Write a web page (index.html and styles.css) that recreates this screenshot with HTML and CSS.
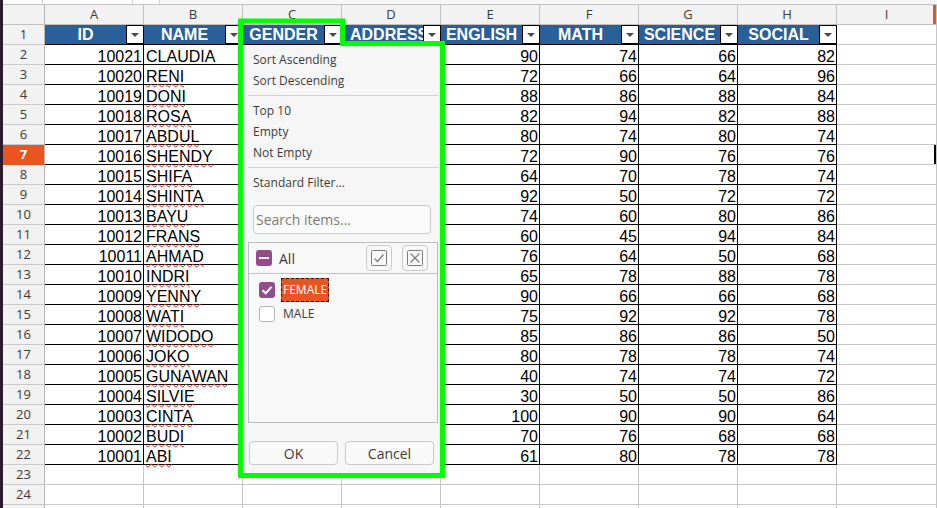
FILE: index.html
```html
<!DOCTYPE html>
<html lang="en">
<head>
  <meta charset="UTF-8" />
  <meta name="viewport" content="width=device-width, initial-scale=1.0"/>
  <title>Scores | AutoFilter</title>
  <link rel="stylesheet" href="styles.css">
</head>
<body>

<div class="window">
  <div class="edge"></div>

  <div class="sheet">
    <div class="toolbar">
      <div class="tool"></div>
      <div class="tool wide"></div>
      <div class="tool small"></div>
    </div>

    <div class="row colhead">
      <div class="rh"></div>
      <div class="c">A</div>
      <div class="c">B</div>
      <div class="c">C</div>
      <div class="c">D</div>
      <div class="c">E</div>
      <div class="c">F</div>
      <div class="c">G</div>
      <div class="c">H</div>
      <div class="c last mark">I</div>
    </div>

    <div class="row thead">
      <div class="rh">1</div>
      <div class="c"><span class="label">ID</span><span class="dd"></span></div>
      <div class="c"><span class="label">NAME</span><span class="dd"></span></div>
      <div class="c"><span class="label">GENDER</span><span class="dd"></span></div>
      <div class="c"><span class="label clip">ADDRESS</span><span class="dd"></span></div>
      <div class="c"><span class="label">ENGLISH</span><span class="dd"></span></div>
      <div class="c"><span class="label">MATH</span><span class="dd"></span></div>
      <div class="c"><span class="label">SCIENCE</span><span class="dd"></span></div>
      <div class="c"><span class="label">SOCIAL</span><span class="dd"></span></div>
      <div class="c last"></div>
    </div>

    <div class="row tr"><div class="rh">2</div><div class="c">10021</div><div class="c">CLAUDIA</div><div class="c"></div><div class="c"></div><div class="c">90</div><div class="c">74</div><div class="c">66</div><div class="c">82</div><div class="c last"></div></div>
    <div class="row tr"><div class="rh">3</div><div class="c">10020</div><div class="c"><span class="typo">RENI</span></div><div class="c"></div><div class="c"></div><div class="c">72</div><div class="c">66</div><div class="c">64</div><div class="c">96</div><div class="c last"></div></div>
    <div class="row tr"><div class="rh">4</div><div class="c">10019</div><div class="c"><span class="typo">DONI</span></div><div class="c"></div><div class="c"></div><div class="c">88</div><div class="c">86</div><div class="c">88</div><div class="c">84</div><div class="c last"></div></div>
    <div class="row tr"><div class="rh">5</div><div class="c">10018</div><div class="c"><span class="typo">ROSA</span></div><div class="c"></div><div class="c"></div><div class="c">82</div><div class="c">94</div><div class="c">82</div><div class="c">88</div><div class="c last"></div></div>
    <div class="row tr"><div class="rh">6</div><div class="c">10017</div><div class="c"><span class="typo">ABDUL</span></div><div class="c"></div><div class="c"></div><div class="c">80</div><div class="c">74</div><div class="c">80</div><div class="c">74</div><div class="c last"></div></div>
    <div class="row tr"><div class="rh sel">7</div><div class="c">10016</div><div class="c"><span class="typo">SHENDY</span></div><div class="c"></div><div class="c"></div><div class="c">72</div><div class="c">90</div><div class="c">76</div><div class="c">76</div><div class="c last cursor"></div></div>
    <div class="row tr"><div class="rh">8</div><div class="c">10015</div><div class="c"><span class="typo">SHIFA</span></div><div class="c"></div><div class="c"></div><div class="c">64</div><div class="c">70</div><div class="c">78</div><div class="c">74</div><div class="c last"></div></div>
    <div class="row tr"><div class="rh">9</div><div class="c">10014</div><div class="c"><span class="typo">SHINTA</span></div><div class="c"></div><div class="c"></div><div class="c">92</div><div class="c">50</div><div class="c">72</div><div class="c">72</div><div class="c last"></div></div>
    <div class="row tr"><div class="rh">10</div><div class="c">10013</div><div class="c"><span class="typo">BAYU</span></div><div class="c"></div><div class="c"></div><div class="c">74</div><div class="c">60</div><div class="c">80</div><div class="c">86</div><div class="c last"></div></div>
    <div class="row tr"><div class="rh">11</div><div class="c">10012</div><div class="c"><span class="typo">FRANS</span></div><div class="c"></div><div class="c"></div><div class="c">60</div><div class="c">45</div><div class="c">94</div><div class="c">84</div><div class="c last"></div></div>
    <div class="row tr"><div class="rh">12</div><div class="c">10011</div><div class="c"><span class="typo">AHMAD</span></div><div class="c"></div><div class="c"></div><div class="c">76</div><div class="c">64</div><div class="c">50</div><div class="c">68</div><div class="c last"></div></div>
    <div class="row tr"><div class="rh">13</div><div class="c">10010</div><div class="c"><span class="typo">INDRI</span></div><div class="c"></div><div class="c"></div><div class="c">65</div><div class="c">78</div><div class="c">88</div><div class="c">78</div><div class="c last"></div></div>
    <div class="row tr"><div class="rh">14</div><div class="c">10009</div><div class="c"><span class="typo">YENNY</span></div><div class="c"></div><div class="c"></div><div class="c">90</div><div class="c">66</div><div class="c">66</div><div class="c">68</div><div class="c last"></div></div>
    <div class="row tr"><div class="rh">15</div><div class="c">10008</div><div class="c"><span class="typo">WATI</span></div><div class="c"></div><div class="c"></div><div class="c">75</div><div class="c">92</div><div class="c">92</div><div class="c">78</div><div class="c last"></div></div>
    <div class="row tr"><div class="rh">16</div><div class="c">10007</div><div class="c"><span class="typo">WIDODO</span></div><div class="c"></div><div class="c"></div><div class="c">85</div><div class="c">86</div><div class="c">86</div><div class="c">50</div><div class="c last"></div></div>
    <div class="row tr"><div class="rh">17</div><div class="c">10006</div><div class="c"><span class="typo">JOKO</span></div><div class="c"></div><div class="c"></div><div class="c">80</div><div class="c">78</div><div class="c">78</div><div class="c">74</div><div class="c last"></div></div>
    <div class="row tr"><div class="rh">18</div><div class="c">10005</div><div class="c"><span class="typo">GUNAWAN</span></div><div class="c"></div><div class="c"></div><div class="c">40</div><div class="c">74</div><div class="c">74</div><div class="c">72</div><div class="c last"></div></div>
    <div class="row tr"><div class="rh">19</div><div class="c">10004</div><div class="c"><span class="typo">SILVIE</span></div><div class="c"></div><div class="c"></div><div class="c">30</div><div class="c">50</div><div class="c">50</div><div class="c">86</div><div class="c last"></div></div>
    <div class="row tr"><div class="rh">20</div><div class="c">10003</div><div class="c"><span class="typo">CINTA</span></div><div class="c"></div><div class="c"></div><div class="c">100</div><div class="c">90</div><div class="c">90</div><div class="c">64</div><div class="c last"></div></div>
    <div class="row tr"><div class="rh">21</div><div class="c">10002</div><div class="c"><span class="typo">BUDI</span></div><div class="c"></div><div class="c"></div><div class="c">70</div><div class="c">76</div><div class="c">68</div><div class="c">68</div><div class="c last"></div></div>
    <div class="row tr"><div class="rh">22</div><div class="c">10001</div><div class="c"><span class="typo">ABI</span></div><div class="c"></div><div class="c"></div><div class="c">61</div><div class="c">80</div><div class="c">78</div><div class="c">78</div><div class="c last"></div></div>

    <div class="row"><div class="rh">23</div><div class="c"></div><div class="c"></div><div class="c"></div><div class="c"></div><div class="c"></div><div class="c"></div><div class="c"></div><div class="c"></div><div class="c last"></div></div>
    <div class="row"><div class="rh">24</div><div class="c"></div><div class="c"></div><div class="c"></div><div class="c"></div><div class="c"></div><div class="c"></div><div class="c"></div><div class="c"></div><div class="c last"></div></div>
    <div class="row"><div class="rh"></div><div class="c"></div><div class="c"></div><div class="c"></div><div class="c"></div><div class="c"></div><div class="c"></div><div class="c"></div><div class="c"></div><div class="c last"></div></div>
  </div>

  <!-- autofilter dropdown for GENDER -->
  <div class="filter">
    <div class="menu">
      <div class="item">Sort Ascending</div>
      <div class="item">Sort Descending</div>
      <div class="sep"></div>
      <div class="item">Top 10</div>
      <div class="item">Empty</div>
      <div class="item">Not Empty</div>
      <div class="sep"></div>
      <div class="item">Standard Filter...</div>
    </div>

    <input class="search" type="text" placeholder="Search items...">

    <div class="list">
      <div class="list-head">
        <span class="box on">
          <svg width="16" height="16" viewBox="0 0 16 16"><rect x="3" y="7" width="10" height="2" fill="#fff"/></svg>
        </span>
        <span class="all">All</span>
        <button class="icon-btn">
          <svg width="16" height="16" viewBox="0 0 16 16" fill="none" stroke="#7b7b7b">
            <rect x="0.5" y="0.5" width="15" height="15" rx="1"/>
            <polyline points="3.5,8.5 6.5,11.5 12.5,4.5" stroke-width="1.2"/>
          </svg>
        </button>
        <button class="icon-btn">
          <svg width="16" height="16" viewBox="0 0 16 16" fill="none" stroke="#7b7b7b">
            <rect x="0.5" y="0.5" width="15" height="15" rx="1"/>
            <path d="M3.5 3.5 L12.5 12.5 M12.5 3.5 L3.5 12.5" stroke-width="1.2"/>
          </svg>
        </button>
      </div>
      <div class="entries">
        <div class="entry">
          <span class="box on">
            <svg width="16" height="16" viewBox="0 0 16 16" fill="none"><polyline points="3.5,8.2 6.7,11.2 12.5,4.8" stroke="#fff" stroke-width="2"/></svg>
          </span>
          <span class="name focus">FEMALE</span>
        </div>
        <div class="entry">
          <span class="box"></span>
          <span class="name">MALE</span>
        </div>
      </div>
    </div>

    <div class="actions">
      <button class="btn">OK</button>
      <button class="btn">Cancel</button>
    </div>
  </div>

  <svg class="outline" width="937" height="508">
    <path d="M240.5 475.5 V21 H342.5 V43.5 H442.5 V475.5 Z" fill="none" stroke="#00ff00" stroke-width="5"/>
  </svg>
</div>

</body>
</html>
```

FILE: styles.css
```css
* {
  box-sizing: border-box;
}

body {
  margin: 0;
  overflow: hidden;
  background-color: #fff;
}

.window {
  position: relative;
  display: flex;
  width: 937px;
  height: 508px;
  overflow: hidden;
  background-color: #fff;
}

.edge {
  flex: none;
  width: 3px;
  background-color: #2c1b2a;
}

.sheet {
  flex: 1;
  min-width: 0;
}

.toolbar {
  display: flex;
  height: 5px;
  background-color: #f6f6f6;
  border-bottom: 1px solid #c4c4c4;
}

.tool {
  width: 40px;
  border-right: 1px solid #cfcfcf;
  background-color: #fcfcfc;
}

.tool.wide {
  width: 90px;
}

.tool.small {
  width: 27px;
}

/* grid */

.row {
  display: flex;
  height: 20px;
}

.rh {
  flex: none;
  width: 42px;
  height: 20px;
  border-right: 1px solid #b5b5b5;
  border-bottom: 1px solid #c9c9c9;
  background-color: #f2f2f2;
  text-align: center;
  font: 13px/19px "Open Sans", sans-serif;
  color: #3a3a3a;
}

.rh.sel {
  background-color: #e95420;
  color: #fff;
  font-weight: bold;
  border-bottom-color: #e95420;
}

.c {
  flex: none;
  width: 99px;
  height: 20px;
  border-right: 1px solid #c6c6c6;
  border-bottom: 1px solid #c6c6c6;
  font: 16px/23px "Liberation Sans", Arial, sans-serif;
  color: #000;
  white-space: nowrap;
}

.c.last {
  flex: 1;
}

.colhead .c {
  background-color: #f2f2f2;
  border-color: #c0c0c0;
  text-align: center;
  font: 13px/19px "Open Sans", sans-serif;
  color: #3a3a3a;
}

.colhead .rh {
  border-bottom-color: #c0c0c0;
}

.colhead .c.mark {
  box-shadow: inset -3px 0 #e95420;
}

/* table A1:H22 */

.thead .c,
.tr .c {
  border-color: #000;
}

.thead .c.last,
.tr .c.last {
  border-color: #c6c6c6;
}

.thead .c {
  display: flex;
  background-color: #2a6099;
  color: #fff;
  font-weight: bold;
  line-height: 20px;
}

.thead .c.last {
  background-color: #fff;
}

.label {
  flex: 1;
  min-width: 0;
  overflow: hidden;
  text-align: center;
}

.label.clip {
  text-align: left;
  padding-left: 8px;
}

.dd {
  flex: none;
  display: flex;
  align-items: center;
  justify-content: center;
  width: 17px;
  height: 19px;
  background-color: #fff;
  border: 1px solid #000;
  border-right: none;
}

.dd::after {
  content: "";
  border-left: 4px solid transparent;
  border-right: 4px solid transparent;
  border-top: 4px solid #4a4a4a;
}

.tr .c {
  text-align: right;
  padding-right: 1px;
}

.tr .c:nth-child(3) {
  text-align: left;
  padding-left: 2px;
}

.tr .c.cursor {
  box-shadow: inset -2px 0 #000;
}

.typo {
  text-decoration: underline wavy #e0201b;
  text-decoration-thickness: 1px;
  text-underline-offset: 1px;
}

/* autofilter popup */

.filter {
  position: absolute;
  left: 243px;
  top: 45px;
  width: 197px;
  height: 428px;
  display: flex;
  flex-direction: column;
  background-color: #f6f6f6;
  font-family: "Open Sans", sans-serif;
  color: #3c3c3c;
}

.menu {
  padding-top: 4px;
}

.item {
  height: 21px;
  line-height: 21px;
  padding-left: 10px;
  font-size: 12px;
}

.sep {
  height: 1px;
  margin: 4px 2px 4px 5px;
  background-color: #d2d2d2;
}

.search {
  width: 178px;
  height: 29px;
  margin: 12px 0 0 10px;
  padding: 0 2px;
  border: 1px solid #cacaca;
  border-radius: 4px;
  background-color: #fafafa;
  font: 14px "Open Sans", sans-serif;
  color: #333;
  outline: none;
}

.search::placeholder {
  color: #7a7a7a;
}

.list {
  width: 190px;
  height: 181px;
  margin: 8px 0 0 5px;
  border: 1px solid #bcbcbc;
  background-color: #f8f8f8;
}

.list-head {
  display: flex;
  align-items: center;
  height: 31px;
  padding: 0 9px 0 7px;
  border-bottom: 1px solid #c4c4c4;
}

.box {
  flex: none;
  display: block;
  width: 16px;
  height: 16px;
  border: 1px solid #b3b3b3;
  border-radius: 3px;
  background-color: #fff;
}

.box.on {
  border: none;
  background-color: #924d8b;
}

.box svg {
  display: block;
}

.all {
  flex: 1;
  margin-left: 7px;
  font-size: 14px;
}

.icon-btn {
  display: flex;
  align-items: center;
  justify-content: center;
  width: 26px;
  height: 26px;
  margin-left: 10px;
  padding: 0;
  border: 1px solid #c9c9c9;
  border-radius: 4px;
  background-color: #f8f8f8;
}

.entries {
  padding: 4px 0 0 10px;
}

.entry {
  display: flex;
  align-items: center;
  height: 24px;
}

.name {
  margin-left: 6px;
  padding: 0 1px;
  border: 1px dashed transparent;
  font-size: 12px;
  line-height: 22px;
}

.name.focus {
  background-color: #e95420;
  color: #fff;
  border-color: #1c1c1c;
}

.actions {
  display: flex;
  gap: 7px;
  margin-top: 18px;
  padding-left: 6px;
}

.btn {
  width: 89px;
  height: 24px;
  padding: 0;
  border: 1px solid #c8c8c8;
  border-radius: 4px;
  background-color: #f9f9f9;
  font: 14px "Open Sans", sans-serif;
  color: #3c3c3c;
}

.outline {
  position: absolute;
  left: 0;
  top: 0;
  pointer-events: none;
}
```
